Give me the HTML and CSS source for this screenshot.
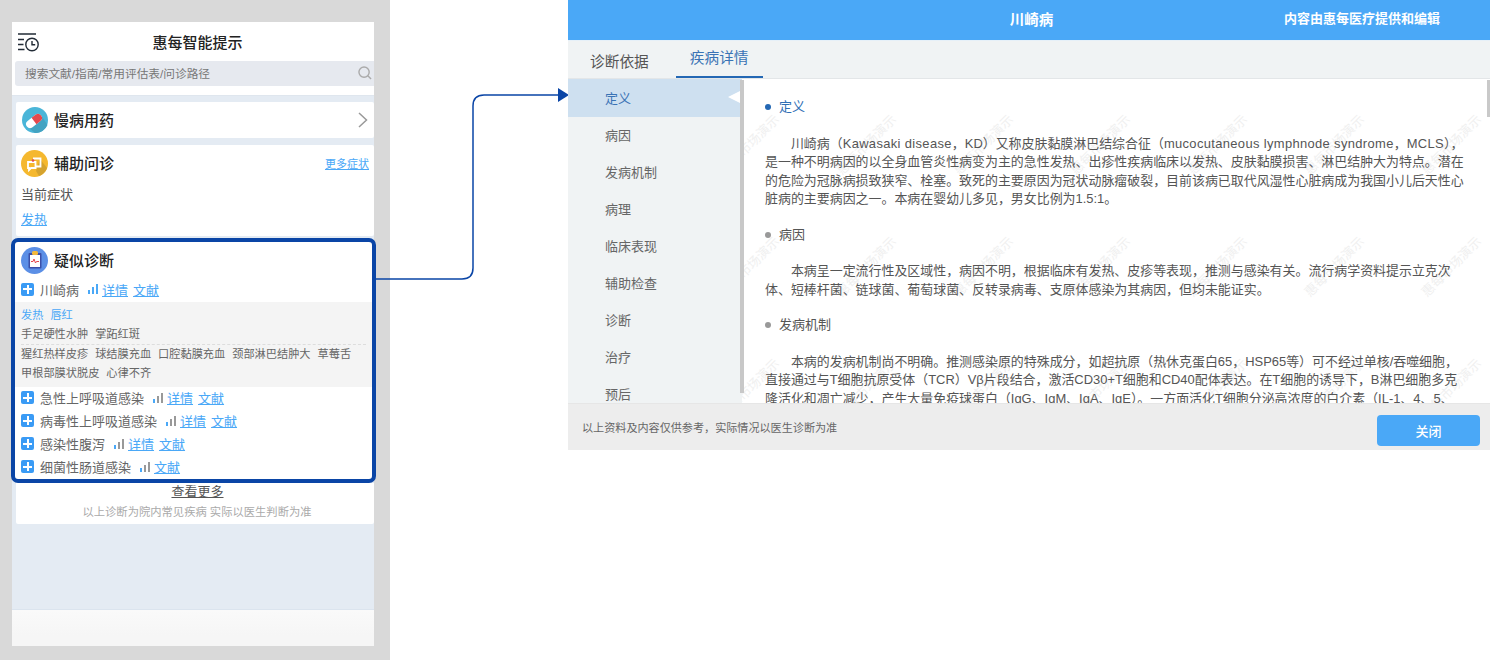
FILE: index.html
```html
<!DOCTYPE html>
<html lang="zh-CN">
<head>
    <meta charset="UTF-8">
    <title>惠每智能提示</title>
    <link rel="stylesheet" href="styles.css">
</head>
<body>
<div class="canvas">

    <!-- 左侧：手机端 -->
    <section class="panel">
        <div class="phone">
            <header class="phone-top">
                <div class="phone-title">
                    <svg class="history-icon" width="22" height="20" viewBox="0 0 22 20" fill="none" stroke="#222b36" stroke-width="1.4">
                        <path d="M0 1h18M0 6.500h6M0 11.500h5.500M0 16.500h6.500"/>
                        <circle cx="14" cy="11.500" r="6.200"/>
                        <path d="M14 8v3.800h3.200"/>
                    </svg>
                    <span>惠每智能提示</span>
                </div>
                <div class="search">
                    <span>搜索文献/指南/常用评估表/问诊路径</span>
                    <svg width="14" height="14" viewBox="0 0 15 15" fill="none" stroke="#aaa" stroke-width="1.5">
                        <circle cx="6.500" cy="6.500" r="5.500"/>
                        <path d="M10.500 10.500l3.500 3.500"/>
                    </svg>
                </div>
            </header>

            <main class="phone-main">
                <div class="card card-drug">
                    <svg class="round-icon" width="26" height="26" viewBox="0 0 26 26">
                        <circle cx="13" cy="13" r="13" fill="#4ab5d8"/>
                        <path d="M7 21L19 8l6.500 10A13 13 0 0 1 13 26z" fill="#43a3c2"/>
                        <g transform="rotate(-38 12 14)">
                            <rect x="3" y="10" width="18" height="8" rx="4" fill="#fff"/>
                            <path d="M12 10h5a4 4 0 0 1 0 8h-5z" fill="#e5484d"/>
                        </g>
                    </svg>
                    <span class="card-title">慢病用药</span>
                    <svg class="chevron" width="10" height="16" viewBox="0 0 10 16" fill="none" stroke="#999" stroke-width="1.5">
                        <path d="M1 1l7.500 7L1 15"/>
                    </svg>
                </div>

                <div class="card card-ask">
                    <div class="card-head">
                        <svg class="round-icon" width="27" height="27" viewBox="0 0 27 27">
                            <circle cx="13.500" cy="13.500" r="13.500" fill="#f5b82e"/>
                            <path d="M15 21l4-12 7 9a13.500 13.500 0 0 1-8 8z" fill="#d5a32f"/>
                            <path d="M12 8.500h7.500v8h-5" fill="none" stroke="#fff" stroke-width="1.800"/>
                            <path d="M7 12h7.500v6H10l-2 2v-2H7z" fill="#f5b82e" stroke="#fff" stroke-width="1.800"/>
                            <circle cx="12" cy="10.500" r="1.300" fill="#e5484d"/>
                        </svg>
                        <span class="card-title">辅助问诊</span>
                        <a class="more-link">更多症状</a>
                    </div>
                    <p class="current-label">当前症状</p>
                    <a class="link current-link">发热</a>
                </div>

                <div class="card-diagnosis">
                    <div class="card-head diagnosis-head">
                        <svg class="round-icon" width="27" height="27" viewBox="0 0 27 27">
                            <circle cx="13.500" cy="13.500" r="13.500" fill="#5b8fe6"/>
                            <rect x="7.500" y="6" width="13" height="15.500" rx="1" fill="#3a4fa8"/>
                            <rect x="9" y="8" width="10" height="12" fill="#fff"/>
                            <rect x="11" y="4" width="6" height="4" rx="1.500" fill="#f3b93c"/>
                            <path d="M10 14.500h2l1-2.500 1.500 4 1-1.500h2.500" fill="none" stroke="#e5484d" stroke-width="1"/>
                        </svg>
                        <span class="card-title">疑似诊断</span>
                    </div>

                    <div class="dx-row">
                        <i class="plus"></i>
                        <span class="dx-name">川崎病</span>
                        <span class="bars"><i></i><i></i><i></i></span>
                        <a class="link">详情</a>
                        <a class="link">文献</a>
                    </div>

                    <div class="symptoms">
                        <div class="symptom-group dashed">
                            <div class="tags tags-hit"><span>发热</span><span>唇红</span></div>
                            <div class="tags"><span>手足硬性水肿</span><span>掌跖红斑</span></div>
                        </div>
                        <div class="symptom-group">
                            <div class="tags"><span>猩红热样皮疹</span><span>球结膜充血</span><span>口腔黏膜充血</span><span>颈部淋巴结肿大</span><span>草莓舌</span></div>
                            <div class="tags"><span>甲根部膜状脱皮</span><span>心律不齐</span></div>
                        </div>
                    </div>

                    <div class="dx-row">
                        <i class="plus"></i>
                        <span class="dx-name">急性上呼吸道感染</span>
                        <span class="bars low"><i></i><i></i><i></i></span>
                        <a class="link">详情</a>
                        <a class="link">文献</a>
                    </div>
                    <div class="dx-row">
                        <i class="plus"></i>
                        <span class="dx-name">病毒性上呼吸道感染</span>
                        <span class="bars low"><i></i><i></i><i></i></span>
                        <a class="link">详情</a>
                        <a class="link">文献</a>
                    </div>
                    <div class="dx-row">
                        <i class="plus"></i>
                        <span class="dx-name">感染性腹泻</span>
                        <span class="bars low"><i></i><i></i><i></i></span>
                        <a class="link">详情</a>
                        <a class="link">文献</a>
                    </div>
                    <div class="dx-row">
                        <i class="plus"></i>
                        <span class="dx-name">细菌性肠道感染</span>
                        <span class="bars low"><i></i><i></i><i></i></span>
                        <a class="link">文献</a>
                    </div>
                </div>

                <div class="card card-more">
                    <a class="see-more">查看更多</a>
                    <p class="more-note">以上诊断为院内常见疾病 实际以医生判断为准</p>
                </div>
            </main>

            <div class="phone-bottom"></div>
        </div>
    </section>

    <!-- 连接线 -->
    <svg class="connector" width="200" height="200" viewBox="0 0 200 200" fill="none">
        <path d="M0 191H86Q97 191 97 180V18Q97 7 108 7H184" stroke="#0a45a6" stroke-width="1.500"/>
        <path d="M182 0l11 7-11 7z" fill="#0a45a6"/>
    </svg>

    <!-- 右侧：疾病详情弹窗 -->
    <section class="modal">
        <header class="modal-head">
            <span class="modal-title">川崎病</span>
            <span class="modal-source">内容由惠每医疗提供和编辑</span>
        </header>

        <nav class="tabs">
            <a class="tab">诊断依据</a>
            <a class="tab active">疾病详情</a>
        </nav>

        <div class="modal-body">
            <aside class="side">
                <a class="side-item active">定义</a>
                <a class="side-item">病因</a>
                <a class="side-item">发病机制</a>
                <a class="side-item">病理</a>
                <a class="side-item">临床表现</a>
                <a class="side-item">辅助检查</a>
                <a class="side-item">诊断</a>
                <a class="side-item">治疗</a>
                <a class="side-item">预后</a>
            </aside>
            <div class="side-thumb"></div>

            <article class="detail">
                <div class="watermarks">
                    <span>惠每市场演示</span><span>惠每市场演示</span><span>惠每市场演示</span><span>惠每市场演示</span><span>惠每市场演示</span><span>惠每市场演示</span><span>惠每市场演示</span>
                    <span>惠每市场演示</span><span>惠每市场演示</span><span>惠每市场演示</span><span>惠每市场演示</span><span>惠每市场演示</span><span>惠每市场演示</span><span>惠每市场演示</span>
                    <span>惠每市场演示</span><span>惠每市场演示</span><span>惠每市场演示</span><span>惠每市场演示</span><span>惠每市场演示</span><span>惠每市场演示</span><span>惠每市场演示</span>
                </div>

                <h4 class="active">定义</h4>
                <p>川崎病（<span class="en">Kawasaki disease</span>，KD）又称皮肤黏膜淋巴结综合征（<span class="en">mucocutaneous lymphnode syndrome</span>，<span class="en">MCLS</span>），<br>是一种不明病因的以全身血管炎性病变为主的急性发热、出疹性疾病临床以发热、皮肤黏膜损害、淋巴结肿大为特点。潜在的危险为冠脉病损致狭窄、栓塞。致死的主要原因为冠状动脉瘤破裂，目前该病已取代风湿性心脏病成为我国小儿后天性心脏病的主要病因之一。本病在婴幼儿多见，男女比例为1.5:1。</p>

                <h4>病因</h4>
                <p>本病呈一定流行性及区域性，病因不明，根据临床有发热、皮疹等表现，推测与感染有关。流行病学资料提示立克次<br>体、短棒杆菌、链球菌、葡萄球菌、反转录病毒、支原体感染为其病因，但均未能证实。</p>

                <h4>发病机制</h4>
                <p>本病的发病机制尚不明确。推测感染原的特殊成分，如超抗原（热休克蛋白65，HSP65等）可不经过单核/吞噬细胞，直接通过与T细胞抗原受体（TCR）Vβ片段结合，激活CD30+T细胞和CD40配体表达。在T细胞的诱导下，B淋巴细胞多克隆活化和凋亡减少，产生大量免疫球蛋白（IgG、IgM、IgA、IgE）。一方面活化T细胞分泌高浓度的白介素（IL-1、4、5、6）。</p>

                <div class="detail-thumb"></div>
            </article>
        </div>

        <footer class="modal-foot">
            <span>以上资料及内容仅供参考，实际情况以医生诊断为准</span>
            <button class="close-btn">关闭</button>
        </footer>
    </section>
</div>
</body>
</html>
```

FILE: styles.css
```css
* {
    box-sizing: border-box;
}
body {
    margin: 0;
    background: #fff;
    font-family: "Liberation Sans", "Noto Sans CJK SC", sans-serif;
    color: #555;
}
p, h4 {
    margin: 0;
}
a {
    cursor: pointer;
}
.canvas {
    position: relative;
    display: flex;
    width: 1502px;
    height: 660px;
    overflow: hidden;
}

/* 左侧手机 */
.panel {
    width: 390px;
    height: 660px;
    flex-shrink: 0;
    padding: 22px 16px 14px 12px;
    background: #d9d9d9;
}
.phone {
    display: flex;
    flex-direction: column;
    height: 100%;
    background: #e4ebf3;
}
.phone-top {
    height: 74px;
    padding-left: 3px;
    background: #fff;
    border-bottom: 1px solid #dfe6ee;
}
.phone-title {
    position: relative;
    height: 39px;
    line-height: 42px;
    text-align: center;
    font-size: 15px;
    font-weight: 500;
    color: #222;
    padding-left: 6px;
}
.history-icon {
    position: absolute;
    left: 3px;
    top: 11px;
}
.search {
    display: flex;
    align-items: center;
    justify-content: space-between;
    height: 25px;
    padding: 0 2px 2px 10px;
    background: #e6e9ef;
    border-radius: 3px 0 0 3px;
    font-size: 11.700px;
    color: #777;
}
.phone-main {
    flex: 1;
    padding: 6px 0 0 4px;
}
.card {
    background: #fff;
    border-radius: 2px;
}
.round-icon {
    flex-shrink: 0;
}
.card-title {
    margin-bottom: 2px;
    font-size: 15px;
    font-weight: 500;
    color: #222;
}
.card-drug {
    display: flex;
    align-items: center;
    height: 36px;
    padding: 0 6px;
    gap: 6px;
}
.chevron {
    margin-left: auto;
}
.card-ask {
    height: 91px;
    margin-top: 7px;
    padding: 4px 5px 0 5px;
}
.card-head {
    display: flex;
    align-items: center;
    gap: 6px;
    height: 28px;
}
.more-link {
    margin-left: auto;
    font-size: 11px;
    color: #4aa8f7;
    text-decoration: underline;
}
.current-label {
    margin-top: 9px;
    font-size: 13px;
    line-height: 18px;
}
.link {
    font-size: 13px;
    color: #4aa8f7;
    text-decoration: underline;
}
.current-link {
    display: block;
    margin-top: 7px;
    line-height: 18px;
}

/* 蓝框高亮 */
.card-diagnosis {
    height: 245px;
    margin: 2px -2px 0 -5px;
    background: #fff;
    border: 4px solid #0a45a6;
    border-radius: 7px;
}
.diagnosis-head {
    height: 36px;
    padding: 1px 0 0 6px;
}
.dx-row {
    display: flex;
    align-items: center;
    height: 23px;
    padding: 0 0 2px 6px;
    font-size: 13px;
    white-space: nowrap;
}
.card-head + .dx-row {
    height: 24px;
}
.plus {
    position: relative;
    width: 13px;
    height: 13px;
    margin-right: 6px;
    background: #3a9bf5;
    border-radius: 2px;
}
.plus::before, .plus::after {
    content: "";
    position: absolute;
    background: #fff;
}
.plus::before {
    left: 2px;
    right: 2px;
    top: 5.500px;
    height: 2px;
}
.plus::after {
    top: 2px;
    bottom: 2px;
    left: 5.500px;
    width: 2px;
}
.dx-name {
    color: #666;
}
.bars {
    display: flex;
    align-items: flex-end;
    gap: 2px;
    height: 10px;
    margin: 0 4px 0 9px;
}
.bars i {
    width: 2px;
    background: #4aa8f7;
}
.bars i:nth-child(1) {
    height: 4px;
}
.bars i:nth-child(2) {
    height: 7px;
}
.bars i:nth-child(3) {
    height: 10px;
}
.bars.low i:nth-child(n+2) {
    background: #999;
}
.dx-row .link + .link {
    margin-left: 5px;
}
.symptoms {
    height: 85px;
    padding: 4px 6px;
    background: #f4f4f4;
    font-size: 11.200px;
}
.dashed {
    border-bottom: 1px dashed #ddd;
}
.tags {
    display: flex;
    gap: 7px;
    height: 19px;
    line-height: 19px;
    white-space: nowrap;
    color: #666;
}
.tags-hit {
    color: #4aa8f7;
}
.card-more {
    height: 41px;
    padding-top: 1px;
    text-align: center;
    border-radius: 0 0 2px 2px;
}
.see-more {
    display: block;
    padding-left: 5px;
    font-size: 13px;
    line-height: 16px;
    color: #555;
    text-decoration: underline;
}
.more-note {
    margin-top: 3px;
    padding-left: 4px;
    font-size: 11.300px;
    line-height: 18px;
    color: #aaa;
}
.phone-bottom {
    height: 37px;
    border-top: 1px solid #dbe4ee;
    background: linear-gradient(#fafafa, #f6f6f6 70%);
}

/* 连接线 */
.connector {
    position: absolute;
    left: 376px;
    top: 88px;
}

/* 右侧弹窗 */
.modal {
    display: flex;
    flex-direction: column;
    width: 922px;
    height: 450px;
    margin-left: 178px;
    flex-shrink: 0;
    background: #fff;
}
.modal-head {
    position: relative;
    height: 40px;
    line-height: 40px;
    text-align: center;
    background: #4aa8f7;
    color: #fff;
    font-weight: 700;
}
.modal-title {
    font-size: 14.500px;
    margin-left: 5px;
}
.modal-source {
    position: absolute;
    right: 50px;
    top: -1px;
    font-size: 13px;
}
.tabs {
    display: flex;
    gap: 13px;
    height: 39px;
    padding-left: 8px;
    border-top: 1px solid #e6f0f8;
    background: #f0f3f4;
    border-bottom: 1px solid #e3e6e8;
}
.tab {
    padding: 0 14px;
    font-size: 14.700px;
    line-height: 43px;
    color: #555;
}
.tab.active {
    height: 37px;
    line-height: 35px;
    color: #3a73b5;
    border-bottom: 2px solid #2468b4;
}
.modal-body {
    position: relative;
    display: flex;
    height: 324px;
    overflow: hidden;
}
.side {
    width: 174px;
    flex-shrink: 0;
    background: #f0f3f4;
    overflow: hidden;
}
.side-item {
    position: relative;
    display: block;
    height: 37px;
    padding-left: 37px;
    font-size: 13px;
    line-height: 38px;
    color: #666;
}
.side-item.active {
    height: 38px;
    line-height: 39px;
    background: #cee0f0;
    color: #3a73b5;
}
.side-item.active::after {
    content: "";
    position: absolute;
    right: 2px;
    top: 12px;
    border-style: solid;
    border-width: 6px 12px 6px 0;
    border-color: transparent #fff transparent transparent;
}
.side-thumb {
    position: absolute;
    left: 172px;
    top: 1px;
    z-index: 1;
    width: 4px;
    height: 313px;
    background: #c8c8c8;
}
.detail {
    position: relative;
    flex: 1;
    padding: 19px 25px 0 23px;
    font-size: 12.950px;
    line-height: 18.500px;
    overflow: hidden;
}
.detail h4 {
    position: relative;
    display: flex;
    align-items: center;
    gap: 8px;
    margin-top: 17px;
    font-size: 13px;
    font-weight: 400;
    color: #555;
}
.detail h4:first-of-type {
    margin-top: 0;
}
.detail h4::before {
    content: "";
    width: 6px;
    height: 6px;
    border-radius: 50%;
    background: #999;
}
.detail h4.active {
    color: #2f6fb5;
}
.detail h4.active::before {
    background: #2468b4;
}
.detail p {
    position: relative;
    margin-top: 18px;
    text-indent: 2em;
}
.en {
    letter-spacing: 0.350px;
}
.watermarks {
    position: absolute;
    left: -50px;
    top: 5px;
    display: grid;
    grid-template-columns: repeat(7, 117px);
    grid-auto-rows: 122px;
    place-items: center;
    font-size: 13px;
    color: #f0f0f0;
    white-space: nowrap;
}
.watermarks span {
    transform: rotate(-45deg);
}
.detail-thumb {
    position: absolute;
    right: 0;
    top: 1px;
    width: 3px;
    height: 37px;
    background: #c9c9c9;
}
.modal-foot {
    display: flex;
    align-items: center;
    justify-content: space-between;
    height: 47px;
    padding: 0 10px 1px 14px;
    background: #ededed;
    border-top: 1px solid #e6e6e6;
    font-size: 11.100px;
    color: #666;
}
.close-btn {
    width: 103px;
    height: 31px;
    margin-top: 8px;
    border: none;
    border-radius: 4px;
    background: #4aa8f7;
    color: #fff;
    font-family: inherit;
    font-size: 13px;
    font-weight: 500;
}
```
